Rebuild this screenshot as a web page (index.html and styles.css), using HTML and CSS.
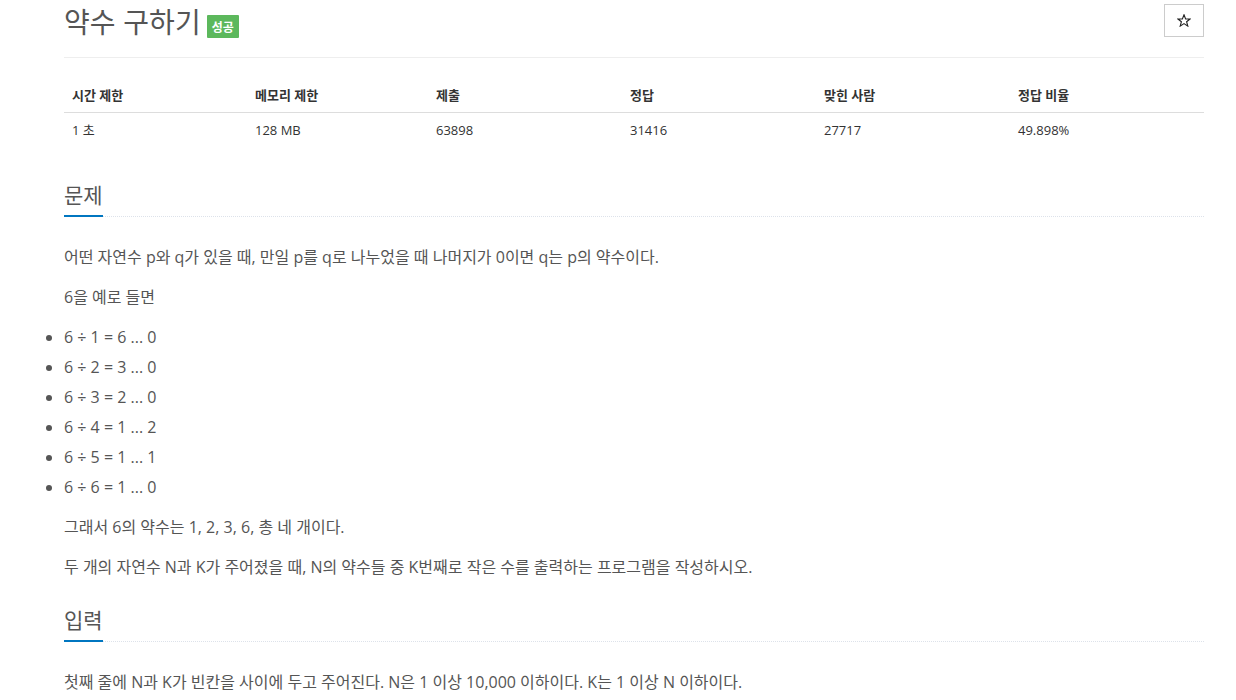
FILE: index.html
```html
<!DOCTYPE html>
<html lang="ko">
<head>
<meta charset="utf-8">
<title>약수 구하기</title>
<link rel="stylesheet" href="styles.css">
</head>
<body>
<div class="container">
  <div class="page-header">
    <h1 class="title">
      <span class="title-text">약수 구하기</span>
      <span class="label-success">성공</span>
    </h1>
    <button class="star-btn" type="button" aria-label="즐겨찾기">
      <svg width="14" height="13" viewBox="0 0 14 13" aria-hidden="true">
        <polygon points="7,0.8 8.6,4.9 13,5 9.6,7.7 10.8,12.1 7,9.6 3.2,12.1 4.4,7.7 1,5 5.4,4.9" fill="none" stroke="#222" stroke-width="1.1" stroke-linejoin="miter"/>
      </svg>
    </button>
  </div>

  <table class="info-table">
    <thead>
      <tr>
        <th class="c1">시간 제한</th>
        <th class="c2">메모리 제한</th>
        <th class="c3">제출</th>
        <th class="c3">정답</th>
        <th class="c3">맞힌 사람</th>
        <th class="c3">정답 비율</th>
      </tr>
    </thead>
    <tbody>
      <tr>
        <td>1 초</td>
        <td>128 MB</td>
        <td>63898</td>
        <td>31416</td>
        <td>27717</td>
        <td>49.898%</td>
      </tr>
    </tbody>
  </table>

  <section class="problem-section">
    <div class="headline"><h2>문제</h2></div>
    <div class="problem-text">
      <p>어떤 자연수 p와 q가 있을 때, 만일 p를 q로 나누었을 때 나머지가 0이면 q는 p의 약수이다.</p>
      <p>6을 예로 들면</p>
      <ul>
        <li>6 ÷ 1 = 6 ... 0</li>
        <li>6 ÷ 2 = 3 ... 0</li>
        <li>6 ÷ 3 = 2 ... 0</li>
        <li>6 ÷ 4 = 1 ... 2</li>
        <li>6 ÷ 5 = 1 ... 1</li>
        <li>6 ÷ 6 = 1 ... 0</li>
      </ul>
      <p>그래서 6의 약수는 1, 2, 3, 6, 총 네 개이다.</p>
      <p>두 개의 자연수 N과 K가 주어졌을 때, N의 약수들 중 K번째로 작은 수를 출력하는 프로그램을 작성하시오.</p>
    </div>
  </section>

  <section class="problem-section">
    <div class="headline"><h2>입력</h2></div>
    <div class="problem-text">
      <p>첫째 줄에 N과 K가 빈칸을 사이에 두고 주어진다. N은 1 이상 10,000 이하이다. K는 1 이상 N 이하이다.</p>
    </div>
  </section>
</div>
</body>
</html>
```

FILE: styles.css
```css
html, body {
  margin: 0;
  padding: 0;
  background: #fff;
}

body {
  font-family: "Open Sans", "Noto Sans CJK KR", sans-serif;
  color: #555;
}

.container {
  width: 1140px;
  padding-left: 64px;
}

.page-header {
  display: flex;
  justify-content: space-between;
  align-items: flex-start;
  padding-bottom: 14px;
  border-bottom: 1px solid #eee;
}

.title {
  display: flex;
  align-items: flex-start;
  margin: 0;
  font-family: "Noto Sans CJK KR", sans-serif;
  font-weight: 400;
  font-size: 28px;
  line-height: 43px;
  color: #555;
}

.title-text {
  display: block;
}

.label-success {
  display: block;
  margin: 15px 0 0 6px;
  padding: 0 5px;
  height: 23px;
  line-height: 23px;
  background: #5cb85c;
  color: #fff;
  font-size: 12px;
  font-weight: 700;
  border-radius: 1px;
}

.star-btn {
  margin-top: 4px;
  width: 40px;
  height: 33px;
  padding: 0;
  background: #fff;
  border: 1px solid #ccc;
  border-radius: 0;
  display: flex;
  align-items: center;
  justify-content: center;
}

.star-btn svg {
  display: block;
  margin-top: -1px;
  margin-left: -1px;
}

.info-table {
  margin-top: 20px;
  margin-bottom: 20px;
  width: 1140px;
  border-collapse: collapse;
  font-size: 13px;
  line-height: 18px;
  color: #333;
}

.info-table th,
.info-table td {
  padding: 8px;
  text-align: left;
  vertical-align: top;
}

.info-table th {
  font-weight: 700;
  border-bottom: 1px solid #ddd;
}

.info-table .c1 { width: 167px; }
.info-table .c2 { width: 165px; }
.info-table .c3 { width: 178px; }

.headline {
  border-bottom: 1px dotted #dde2ea;
  margin: 0 0 25px;
}

.headline h2 {
  display: inline-block;
  margin: 0 0 -1px;
  padding: 12px 0 6px;
  font-family: "Noto Sans CJK KR", sans-serif;
  font-size: 21px;
  font-weight: 400;
  line-height: 30px;
  color: #555;
  border-bottom: 2px solid #0076c0;
}

.problem-text {
  font-size: 16px;
  line-height: 30px;
}

.problem-text p {
  margin: 0 0 10px;
}

.problem-text ul {
  margin: 0 0 10px;
  padding-left: 0;
  list-style: disc outside;
}
```
